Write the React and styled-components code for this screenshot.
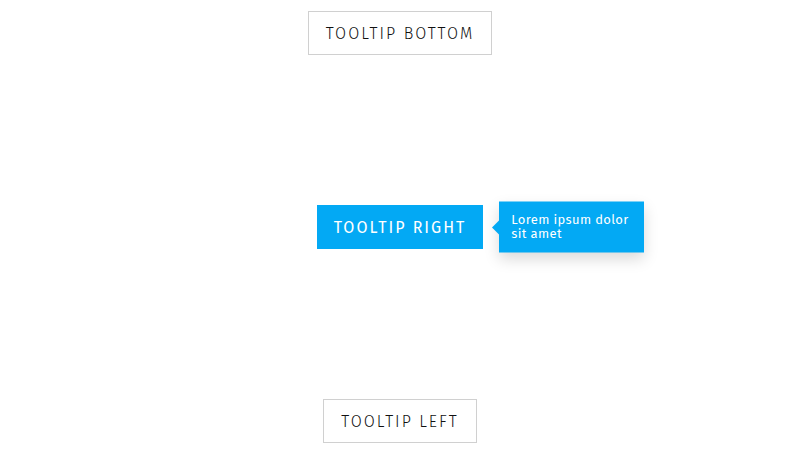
import React from 'react'
import styled, { createGlobalStyle } from 'styled-components'

const Global = createGlobalStyle`
  html, body {
    margin: 0;
    padding: 0;
    background: #fff;
  }
  body {
    font-family: "Fira Sans", "Open Sans", sans-serif;
  }
`

const Page = styled.div`
  width: 800px;
  height: 453px;
  box-sizing: border-box;
  padding-top: 11px;
  display: flex;
  flex-direction: column;
  align-items: center;
  gap: 150px;
`

const Button = styled.button`
  position: relative;
  height: 44px;
  box-sizing: border-box;
  padding: 0 ${p => (p.$primary ? 16 : 17)}px;
  font-family: "Fira Sans", "Open Sans", sans-serif;
  font-size: 16px;
  font-weight: ${p => (p.$primary ? 400 : 300)};
  letter-spacing: 2px;
  text-transform: uppercase;
  cursor: pointer;
  border: 1px solid ${p => (p.$primary ? '#03a9f4' : '#d0d0d0')};
  background: ${p => (p.$primary ? '#03a9f4' : '#fff')};
  color: ${p => (p.$primary ? '#fff' : '#111')};
`

const Tip = styled.div`
  position: absolute;
  left: calc(100% + 17px);
  top: 50%;
  transform: translateY(-50%);
  width: 145px;
  box-sizing: border-box;
  padding: 11px 12px 12px;
  background: #03a9f4;
  color: #fff;
  font-size: 13px;
  font-weight: 400;
  line-height: 14px;
  letter-spacing: 0.35px;
  text-transform: none;
  text-align: left;
  box-shadow: 0 6px 14px rgba(0, 0, 0, 0.15);

  &::before {
    content: '';
    position: absolute;
    left: -7px;
    top: 50%;
    margin-top: -7px;
    border-style: solid;
    border-width: 7px 7px 7px 0;
    border-color: transparent #03a9f4 transparent transparent;
  }
`

export default function App() {
  return (
    <>
      <Global />
      <Page>
        <Button>Tooltip bottom</Button>
        <Button $primary>
          Tooltip right
          <Tip>Lorem ipsum dolor sit amet</Tip>
        </Button>
        <Button>Tooltip left</Button>
      </Page>
    </>
  )
}
